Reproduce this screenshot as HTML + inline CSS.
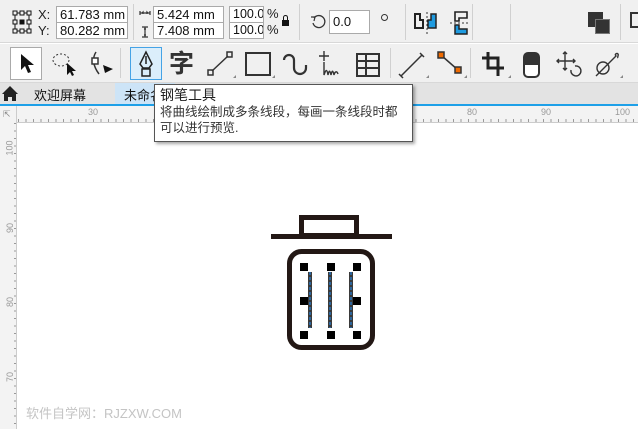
<!DOCTYPE html><html><head><meta charset="utf-8"><style>
*{margin:0;padding:0;box-sizing:border-box}
body{width:638px;height:429px;overflow:hidden;background:#fff;font-family:"Liberation Sans","Noto Sans CJK SC",sans-serif;position:relative}
.a{position:absolute}
.inp{position:absolute;background:#fff;border:1px solid #aaa;font-size:13px;color:#111;padding-left:3px;line-height:15px;white-space:nowrap;overflow:hidden}
.sep{position:absolute;width:1px;background:#d0d0d0}
.t{position:absolute;font-size:13px;color:#222}
</style></head><body>
<div class="a" style="left:0;top:0;width:638px;height:43px;background:#f0f0f0;border-bottom:1px solid #d8d8d8"></div>
<div class="a" style="left:0;top:44px;width:638px;height:39px;background:#f0f0f0;border-bottom:1px solid #d8d8d8"></div>
<!-- toolbar 1 -->
<svg class="a" style="left:12px;top:10px" width="20" height="24" viewBox="0 0 20 24" fill="none" stroke="#111" stroke-width="1"><rect x="1" y="1" width="4" height="4"/><rect x="8" y="1" width="4" height="4"/><rect x="15" y="1" width="4" height="4"/><rect x="1" y="10" width="4" height="4"/><rect x="15" y="10" width="4" height="4"/><rect x="1" y="19" width="4" height="4"/><rect x="8" y="19" width="4" height="4"/><rect x="15" y="19" width="4" height="4"/><rect x="8" y="10" width="4" height="4" fill="#111"/><path d="M5 3h3M12 3h3M5 21h3M12 21h3M3 5v5M17 5v5M3 14v5M17 14v5"/></svg>
<div class="t" style="left:38px;top:7px">X:</div><div class="t" style="left:38px;top:23px">Y:</div>
<div class="inp" style="left:56px;top:6px;width:72px;height:17px">61.783 mm</div>
<div class="inp" style="left:56px;top:22px;width:72px;height:17px">80.282 mm</div>
<div class="sep" style="left:133px;top:4px;height:36px"></div>
<svg class="a" style="left:139px;top:8px" width="12" height="30" fill="none" stroke="#333" stroke-width="1.2"><path d="M1 5h10M1 3v4M11 3v4M3 5l1-1v2M9 5l-1-1v2"/><path d="M6 19v10M3 19h6M3 29h6M5 21h2M5 27h2"/></svg>
<div class="inp" style="left:153px;top:6px;width:71px;height:17px">5.424 mm</div>
<div class="inp" style="left:153px;top:22px;width:71px;height:17px">7.408 mm</div>
<div class="inp" style="left:229px;top:6px;width:35px;height:17px;font-size:12.5px">100.0</div>
<div class="inp" style="left:229px;top:22px;width:35px;height:17px;font-size:12.5px">100.0</div>
<div class="t" style="left:267px;top:6px">%</div><div class="t" style="left:267px;top:22px">%</div>
<div class="a" style="left:282px;top:20px;width:7px;height:6px;background:#111"></div><div class="a" style="left:283px;top:15px;width:5px;height:6px;border:1.5px solid #111;border-bottom:none;border-radius:3px 3px 0 0"></div>
<div class="sep" style="left:299px;top:4px;height:36px"></div>
<svg class="a" style="left:310px;top:14px" width="16" height="16"><path d="M4 4A6 6 0 1 1 3 9" fill="none" stroke="#333" stroke-width="1.3"/><path d="M1 3l4 0l-1 4" fill="none" stroke="#333" stroke-width="1.2"/></svg>
<div class="inp" style="left:329px;top:10px;width:41px;height:24px;line-height:22px">0.0</div>
<div class="a" style="left:381px;top:14px;width:7px;height:7px;border:1px solid #333;border-radius:50%"></div>
<div class="sep" style="left:405px;top:4px;height:36px"></div>
<svg class="a" style="left:410px;top:10px" width="60" height="26"><path d="M5 4h5v6h3v8H5z" fill="none" stroke="#222" stroke-width="2"/><path d="M17 2v24" stroke="#333" stroke-dasharray="2 2"/><path d="M21 4h5v14h-8v-8h3z" fill="#1f9be0" stroke="#222" stroke-width="1.5"/><path d="M45 2h12v6h-8v3h-4z" fill="none" stroke="#222" stroke-width="1.6"/><path d="M40 13h20" stroke="#333" stroke-dasharray="2 2"/><path d="M45 15h4v4h8v5H45z" fill="#1f9be0" stroke="#222" stroke-width="1.5"/></svg>
<div class="sep" style="left:472px;top:4px;height:36px"></div>
<div class="sep" style="left:510px;top:4px;height:36px"></div>
<div class="a" style="left:588px;top:12px;width:15px;height:15px;background:#333"></div><div class="a" style="left:595px;top:19px;width:15px;height:15px;background:#333;border:1px solid #777"></div>
<div class="sep" style="left:620px;top:4px;height:36px"></div>
<div class="a" style="left:630px;top:12px;width:10px;height:16px;border:2px solid #333"></div>
<!-- toolbar 2 -->
<div class="a" style="left:10px;top:47px;width:32px;height:33px;background:#fff;border:1px solid #aaa"></div>
<svg class="a" style="left:19px;top:53px" width="16" height="22"><path d="M2 1v16l4-4 3 7 3-1-3-7h6z" fill="#111"/></svg>
<svg class="a" style="left:50px;top:52px" width="30" height="26" fill="none" stroke="#333"><ellipse cx="11" cy="8" rx="8" ry="6" stroke-dasharray="2 2"/><path d="M17 11v12l3-3 2 4 2-1-2-4h4z" fill="#111" stroke="none"/></svg>
<svg class="a" style="left:88px;top:50px" width="28" height="28" fill="none" stroke="#333" stroke-width="1.5"><path d="M8 2c-4 6-3 14 3 22"/><rect x="4" y="8" width="6" height="6" fill="#fff"/><path d="M15 15l10 4-8 4z" fill="#111" stroke="none"/></svg>
<div class="sep" style="left:120px;top:48px;height:30px"></div>
<div class="a" style="left:130px;top:47px;width:32px;height:33px;background:#dbeefb;border:1px solid #45a3e6"></div>
<svg class="a" style="left:137px;top:50px" width="18" height="28" fill="none" stroke="#222" stroke-width="1.5"><path d="M9 2L3 14l3 4h6l3-4z"/><path d="M9 6v8"/><rect x="5" y="19" width="8" height="7"/></svg>
<div class="a" style="left:169px;top:49px;font-size:25px;font-weight:bold;color:#333;line-height:30px">字</div>
<svg class="a" style="left:206px;top:50px" width="32" height="30" fill="none" stroke="#333" stroke-width="1.5"><rect x="2" y="20" width="5" height="5"/><rect x="21" y="2" width="5" height="5"/><path d="M6 21L22 6"/><path d="M27 28h3v-3z" fill="#888" stroke="none"/></svg>
<svg class="a" style="left:244px;top:50px" width="32" height="30" fill="none" stroke="#333" stroke-width="2"><rect x="2" y="3" width="24" height="22"/><path d="M28 28h3v-3z" fill="#888" stroke="none"/></svg>
<svg class="a" style="left:280px;top:50px" width="30" height="30" fill="none" stroke="#333" stroke-width="2.2"><path d="M4 10a5 5 0 0 1 10 0v8a6 6 0 0 0 12 0v-3"/></svg>
<svg class="a" style="left:317px;top:50px" width="30" height="30" fill="none" stroke="#333" stroke-width="1.4"><path d="M7 1v10M2 6h10M7 12v13c2-6 3-6 4 0c1-5 2-5 3 0c1-5 2-5 3 0c1-4 3-4 4-1"/></svg>
<svg class="a" style="left:355px;top:52px" width="26" height="26" fill="none" stroke="#333" stroke-width="2"><rect x="2" y="2" width="22" height="22"/><path d="M2 9h22M2 16h22M11 2v22"/></svg>
<div class="sep" style="left:390px;top:48px;height:30px"></div>
<svg class="a" style="left:398px;top:50px" width="32" height="30" fill="none" stroke="#333" stroke-width="1.5"><path d="M3 26L24 5M1 24l4 4M22 3l4 4"/><path d="M28 28h3v-3z" fill="#888" stroke="none"/></svg>
<svg class="a" style="left:436px;top:50px" width="32" height="30" stroke="#333" stroke-width="1.5"><path d="M6 6l16 14"/><rect x="2" y="2" width="6" height="6" fill="#f06a00"/><rect x="19" y="17" width="6" height="6" fill="#f06a00"/><path d="M28 28h3v-3z" fill="#888" stroke="none"/></svg>
<div class="sep" style="left:470px;top:48px;height:30px"></div>
<svg class="a" style="left:480px;top:50px" width="32" height="30" fill="none" stroke="#222" stroke-width="3"><path d="M8 2v16h16M2 8h16v18"/><path d="M28 28h3v-3z" fill="#888" stroke="none"/></svg>
<svg class="a" style="left:522px;top:51px" width="20" height="28"><rect x="2" y="2" width="15" height="24" rx="4" fill="#fff" stroke="#333" stroke-width="2"/><path d="M2 14V6a4 4 0 0 1 4-4h7a4 4 0 0 1 4 4v8z" fill="#333"/></svg>
<svg class="a" style="left:555px;top:50px" width="30" height="30" fill="none" stroke="#333" stroke-width="1.4"><path d="M10 2v18M2 11h18M8 4l2-2 2 2M8 18l2 2 2-2M4 9l-2 2 2 2M18 9l2 2-2 2"/><path d="M16 20a5 5 0 1 0 4-4"/></svg>
<svg class="a" style="left:592px;top:50px" width="32" height="30" fill="none" stroke="#333" stroke-width="1.4"><circle cx="11" cy="18" r="6"/><path d="M4 26L24 6c-2-2 1-3 2-2s-1 3 0 4"/><path d="M28 28h3v-3z" fill="#888" stroke="none"/></svg>
<!-- tabs -->
<div class="a" style="left:0;top:83px;width:638px;height:21px;background:#e3e3e3"></div>
<svg class="a" style="left:1px;top:85px" width="18" height="17"><path d="M9 1L1 9h2v7h4v-4h4v4h4V9h2z" fill="#222"/></svg>
<div class="t" style="left:34px;top:85px;font-size:13px;color:#111">欢迎屏幕</div>
<div class="a" style="left:115px;top:83px;width:60px;height:21px;background:#cde4f7"></div>
<div class="t" style="left:124px;top:85px;color:#111">未命名</div>
<div class="a" style="left:0;top:104px;width:638px;height:2px;background:#1ea0e8"></div>
<!-- rulers -->
<div class="a" style="left:0;top:106px;width:638px;height:17px;background:#f3f3f3;border-bottom:1px solid #ccc"></div>
<div class="a" style="left:0;top:106px;width:17px;height:323px;background:#f3f3f3;border-right:1px solid #ccc"></div>
<div class="a" style="left:3px;top:109px;font-size:9px;color:#888">⇱</div>
<div class="a" style="left:88px;top:107px;font-size:9px;color:#999">30</div>
<div class="a" style="left:467px;top:107px;font-size:9px;color:#999">80</div>
<div class="a" style="left:541px;top:107px;font-size:9px;color:#999">90</div>
<div class="a" style="left:615px;top:107px;font-size:9px;color:#999">100</div>
<div class="a" style="left:18px;top:119px;width:620px;height:3px;background:repeating-linear-gradient(90deg,#999 0 1px,transparent 1px 7.5px)"></div>
<div class="a" style="left:14px;top:123px;width:2px;height:306px;background:repeating-linear-gradient(180deg,#999 0 1px,transparent 1px 7.5px)"></div>
<div class="a" style="left:2px;top:143px;font-size:9px;color:#999;transform:rotate(-90deg)">100</div>
<div class="a" style="left:5px;top:223px;font-size:9px;color:#999;transform:rotate(-90deg)">90</div>
<div class="a" style="left:5px;top:297px;font-size:9px;color:#999;transform:rotate(-90deg)">80</div>
<div class="a" style="left:5px;top:372px;font-size:9px;color:#999;transform:rotate(-90deg)">70</div>
<!-- trash -->
<svg class="a" style="left:0;top:0" width="638" height="429">
<rect x="301.5" y="217.5" width="55" height="18" fill="none" stroke="#231815" stroke-width="5"/>
<rect x="271" y="234" width="121" height="5" fill="#231815"/>
<rect x="289.5" y="251.5" width="83" height="96" rx="12" fill="none" stroke="#231815" stroke-width="5"/>
<g stroke="#3a3a3a" stroke-width="4"><path d="M310 272v56M330 272v56M351 272v56"/></g>
<g stroke="#1e90ff" stroke-width="1" stroke-dasharray="3 2"><path d="M310 272v56M330 272v56M351 272v56"/></g>
<g fill="#000"><rect x="300" y="263" width="8" height="8"/><rect x="327" y="263" width="8" height="8"/><rect x="353" y="263" width="8" height="8"/><rect x="300" y="297" width="8" height="8"/><rect x="353" y="297" width="8" height="8"/><rect x="300" y="331" width="8" height="8"/><rect x="327" y="331" width="8" height="8"/><rect x="353" y="331" width="8" height="8"/></g>
</svg>
<div class="a" style="left:26px;top:403px;font-size:13px;color:#c4c4c4">软件自学网：RJZXW.COM</div>
<!-- tooltip -->
<div class="a" style="left:154px;top:84px;width:259px;height:58px;background:#fff;border:1px solid #555;box-shadow:2px 2px 3px rgba(0,0,0,.35);padding:1px 0 0 5px;font-size:12.5px;line-height:16px;color:#333;white-space:nowrap">
<div style="color:#222;font-size:14px;line-height:18px">钢笔工具</div>
<div>将曲线绘制成多条线段，每画一条线段时都</div>
<div>可以进行预览.</div>
</div>
</body></html>
